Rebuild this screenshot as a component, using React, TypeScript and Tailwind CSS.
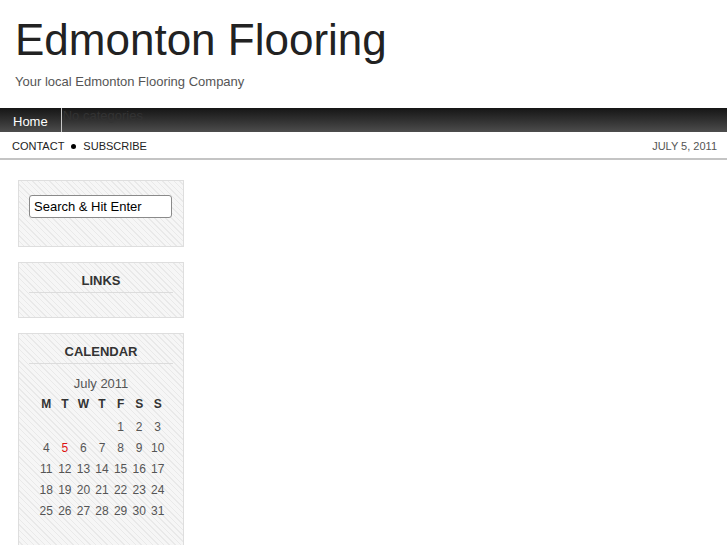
import React from "react"

const stripes =
  "border border-[#dedede] bg-[repeating-linear-gradient(45deg,#f6f6f6_0px,#f6f6f6_3px,#e9e9e9_3px,#e9e9e9_4px)]"

const days: (number | null)[] = [null, null, null, null, 1, 2, 3]
for (let d = 4; d <= 31; d++) days.push(d)

const App: React.FC = () => {
  return (
    <div className="min-h-screen bg-white font-['Liberation_Sans',Arial,sans-serif]">
      {/* Header */}
      <div className="px-[15px] pt-[18px]">
        <h1 className="text-[44px] leading-[44px] text-[#222]">Edmonton Flooring</h1>
        <p className="mt-[12px] text-[13px] leading-[16px] text-[#555]">Your local Edmonton Flooring Company</p>
      </div>

      {/* Nav */}
      <div className="mt-[18px] flex h-[24px] bg-gradient-to-b from-[#161616] to-[#4d4d4d]">
        <div className="flex items-center border-r border-[#c8c8c8] px-[13px] pt-[3px] text-[13px] text-white">Home</div>
        <div className="ml-[1px] text-[13px] leading-[16px] text-[#333]">No categories</div>
      </div>

      {/* Sub bar */}
      <div className="flex h-[28px] items-center justify-between border-b-2 border-[#c4c4c4] pl-[12px] pr-[10px] pt-[2px] text-[11px] uppercase">
        <div className="flex items-center text-[#222]">
          <span>Contact</span>
          <span className="mx-[7px] h-[5px] w-[5px] rounded-full bg-black" />
          <span>Subscribe</span>
        </div>
        <div className="text-[#555]">July 5, 2011</div>
      </div>

      {/* Sidebar */}
      <div className="ml-[18px] mt-[20px] flex w-[166px] flex-col gap-[15px]">
        <div className={`${stripes} px-[10px] pb-[28px] pt-[14px]`}>
          <input
            className="block h-[23px] w-[143px] rounded-[3px] border border-[#8a8a8a] bg-white px-[4px] text-[13px] text-black outline-none"
            defaultValue="Search & Hit Enter"
          />
        </div>

        <div className={`${stripes} px-[10px] pb-[24px] pt-[10px]`}>
          <h3 className="border-b border-[#dcdcdc] pb-[3px] text-center text-[13px] font-bold leading-[16px] text-[#333]">LINKS</h3>
        </div>

        <div className={`${stripes} px-[10px] pb-[30px] pt-[10px]`}>
          <h3 className="border-b border-[#dcdcdc] pb-[3px] text-center text-[13px] font-bold leading-[16px] text-[#333]">CALENDAR</h3>
          <div className="mt-[12px] text-center text-[13px] leading-[16px] text-[#555]">July 2011</div>
          <div className="mx-auto mt-[2px] grid w-[130px] translate-x-[1px] grid-cols-7 text-center text-[12px]">
            {["M", "T", "W", "T", "F", "S", "S"].map((d, i) => (
              <div key={i} className="h-[21px] font-bold leading-[21px] text-[#333]">
                {d}
              </div>
            ))}
            <div className="col-span-7 h-[2px]" />
            {days.map((d, i) => (
              <div key={i} className={`h-[21px] leading-[21px] ${d === 5 ? "text-[#d11]" : "text-[#555]"}`}>
                {d ?? ""}
              </div>
            ))}
          </div>
        </div>
      </div>
    </div>
  )
}

export default App
